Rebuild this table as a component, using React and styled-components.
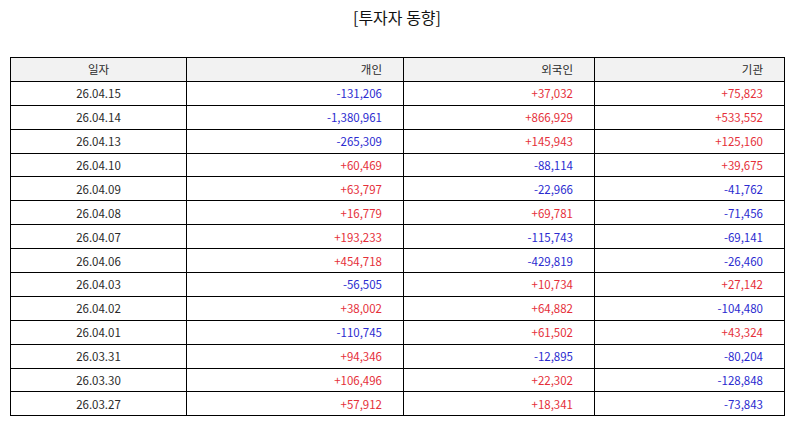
import styled, { createGlobalStyle } from "styled-components";

const rows = [
  ["26.04.15", "-131,206", "+37,032", "+75,823"],
  ["26.04.14", "-1,380,961", "+866,929", "+533,552"],
  ["26.04.13", "-265,309", "+145,943", "+125,160"],
  ["26.04.10", "+60,469", "-88,114", "+39,675"],
  ["26.04.09", "+63,797", "-22,966", "-41,762"],
  ["26.04.08", "+16,779", "+69,781", "-71,456"],
  ["26.04.07", "+193,233", "-115,743", "-69,141"],
  ["26.04.06", "+454,718", "-429,819", "-26,460"],
  ["26.04.03", "-56,505", "+10,734", "+27,142"],
  ["26.04.02", "+38,002", "+64,882", "-104,480"],
  ["26.04.01", "-110,745", "+61,502", "+43,324"],
  ["26.03.31", "+94,346", "-12,895", "-80,204"],
  ["26.03.30", "+106,496", "+22,302", "-128,848"],
  ["26.03.27", "+57,912", "+18,341", "-73,843"],
];

const GlobalStyle = createGlobalStyle`
  html, body {
    margin: 0;
    background: #fff;
    font-family: "Noto Sans CJK KR", "Noto Sans", sans-serif;
  }
`;

export default function App() {
  return (
    <>
      <GlobalStyle />
      <Page>
        <Title>[투자자 동향]</Title>
        <Table>
          <colgroup>
            <col style={{ width: 176 }} />
            <col style={{ width: 217 }} />
            <col style={{ width: 191 }} />
            <col style={{ width: 190 }} />
          </colgroup>
          <thead>
            <tr>
              <Head $center>일자</Head>
              <Head>개인</Head>
              <Head>외국인</Head>
              <Head>기관</Head>
            </tr>
          </thead>
          <tbody>
            {rows.map(([date, ...vals]) => (
              <tr key={date}>
                <DateCell>{date}</DateCell>
                {vals.map((v, i) => (
                  <NumCell key={i} $minus={v.startsWith("-")}>
                    {v}
                  </NumCell>
                ))}
              </tr>
            ))}
          </tbody>
        </Table>
      </Page>
    </>
  );
}

const Page = styled.div`
  padding: 0 10px;
`;

const Title = styled.h1`
  margin: 0;
  height: 57px;
  padding-top: 5px;
  box-sizing: border-box;
  text-align: center;
  font-size: 16px;
  font-weight: 400;
  line-height: 24px;
  color: #111;
`;

const Table = styled.table`
  width: 774px;
  border-collapse: collapse;
  table-layout: fixed;
  font-size: 11.5px;
  color: #2a2a2a;

  td,
  th {
    border: 1.5px solid #000;
    height: 23.9px;
    padding: 0 21px;
    box-sizing: border-box;
    line-height: 14px;
  }
`;

const Head = styled.th`
  background: #f2f2f2;
  font-weight: 400;
  text-align: ${({ $center }) => ($center ? "center" : "right")};
`;

const DateCell = styled.td`
  text-align: center;
`;

const NumCell = styled.td`
  text-align: right;
  color: ${({ $minus }) => ($minus ? "#2b2bd0" : "#e5303a")};
`;
